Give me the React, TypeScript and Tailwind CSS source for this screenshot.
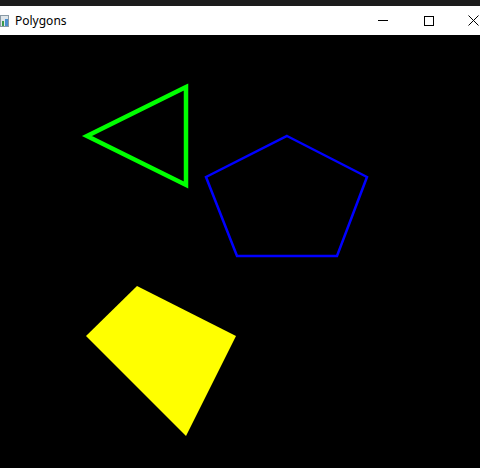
export default function App() {
  return (
    <div className="w-[480px] h-[468px] flex flex-col bg-black overflow-hidden" style={{ fontFamily: '"Noto Sans", "Liberation Sans", sans-serif' }}>
      <div className="h-[6px] bg-[#1c1c1c]" />
      <div className="h-[29px] bg-white flex items-center relative">
        <svg width="9" height="12" viewBox="0 0 9 12" className="ml-0">
          <rect x="0" y="0" width="9" height="12" fill="#dfe6ea" />
          <rect x="0.5" y="0.5" width="8" height="11" fill="none" stroke="#8a9aa5" />
          <rect x="2" y="6" width="2" height="5" fill="#3c9a48" />
          <rect x="5" y="4" width="3" height="7" fill="#4a8fd0" />
        </svg>
        <span className="ml-[6px] text-[12px] text-black leading-none">Polygons</span>
        <div className="ml-auto flex items-center h-full">
          <div className="w-[46px] h-full flex items-center justify-center">
            <div className="w-[10px] h-px bg-black" />
          </div>
          <div className="w-[46px] h-full flex items-center justify-center">
            <div className="w-[10px] h-[10px] border border-black" />
          </div>
          <div className="w-[28px] h-full flex items-center justify-end pr-[1px]">
            <svg width="11" height="11" viewBox="0 0 11 11">
              <path d="M0.5 0.5 L10.5 10.5 M10.5 0.5 L0.5 10.5" stroke="black" strokeWidth="1" />
            </svg>
          </div>
        </div>
      </div>
      <div className="flex-1 bg-black">
        <svg width="480" height="433" viewBox="0 35 480 433">
          <polygon points="186,87 87,136 186,185" fill="none" stroke="#00ff00" strokeWidth="4.5" strokeLinejoin="miter" />
          <polygon points="287,136 367,177 337,256 237,256 206,177" fill="none" stroke="#0000ff" strokeWidth="2.5" />
          <polygon points="137,286 236,336 186,436 86,336" fill="#ffff00" />
        </svg>
      </div>
    </div>
  );
}
